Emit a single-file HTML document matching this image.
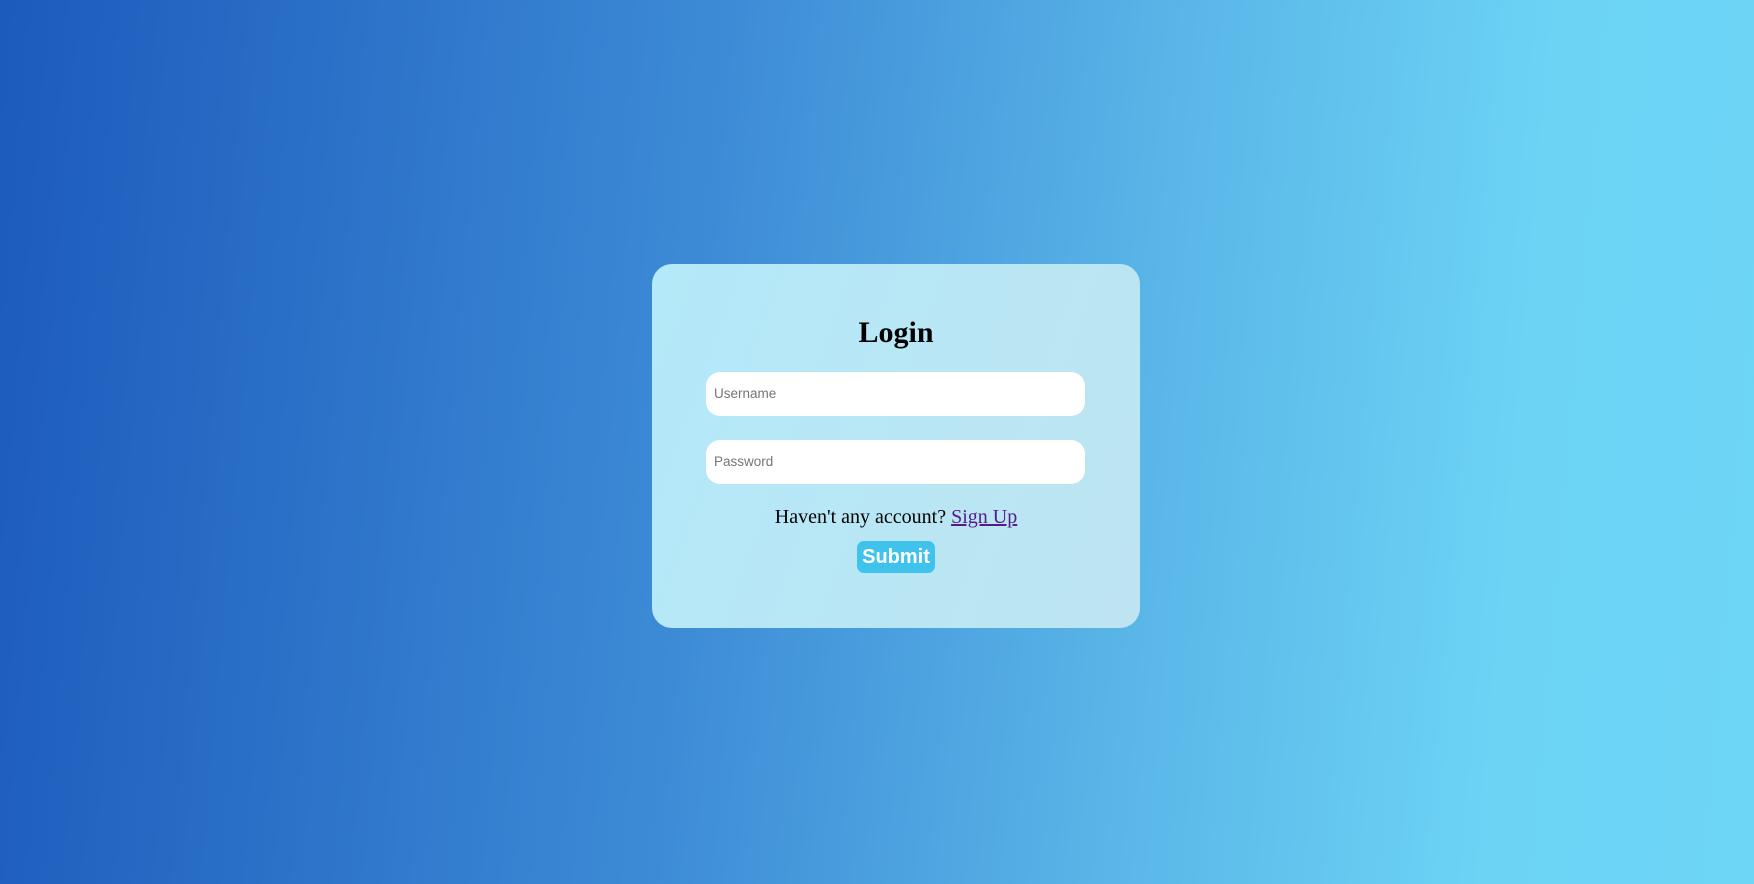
<!DOCTYPE html>
<html><head><style>
html,body{margin:0;padding:0;width:1754px;height:884px;overflow:hidden}
body{background:linear-gradient(95deg,#1c5abc 0%,#3d8bd6 40%,#5ab6e8 65%,#6cd3f5 85%,#6dd5f6 100%);position:relative;font-family:"Liberation Serif",serif}
.card{position:absolute;left:652px;top:264px;width:488px;height:364px;border-radius:20px;background:linear-gradient(110deg,#b3e9f9,#bee4f1)}
h1{position:absolute;left:0;width:100%;top:300px;margin:0;text-align:center;font-size:30px;font-weight:bold;line-height:1;color:#000}
.in{position:absolute;left:54px;width:379px;height:44px;background:#fff;border-radius:14px;font-family:"Liberation Sans",sans-serif;font-size:13.5px;color:#757575;line-height:44px;text-indent:8px;box-sizing:border-box}
.t{position:absolute;left:0;width:100%;top:242px;text-align:center;font-size:20px;color:#000}
.t a{color:#551a8b;text-decoration:underline}
.btn{position:absolute;left:205px;top:277px;width:78px;height:32px;border-radius:7px;background:#3fc3ec;color:#fff;font-family:"Liberation Sans",sans-serif;font-weight:bold;font-size:20px;line-height:32px;text-align:center}
</style></head><body>
<div class="card">
<h1 style="top:54px">Login</h1>
<div class="in" style="top:108px">Username</div>
<div class="in" style="top:176px">Password</div>
<div class="t">Haven't any account? <a>Sign Up</a></div>
<div class="btn">Submit</div>
</div>
</body></html>
